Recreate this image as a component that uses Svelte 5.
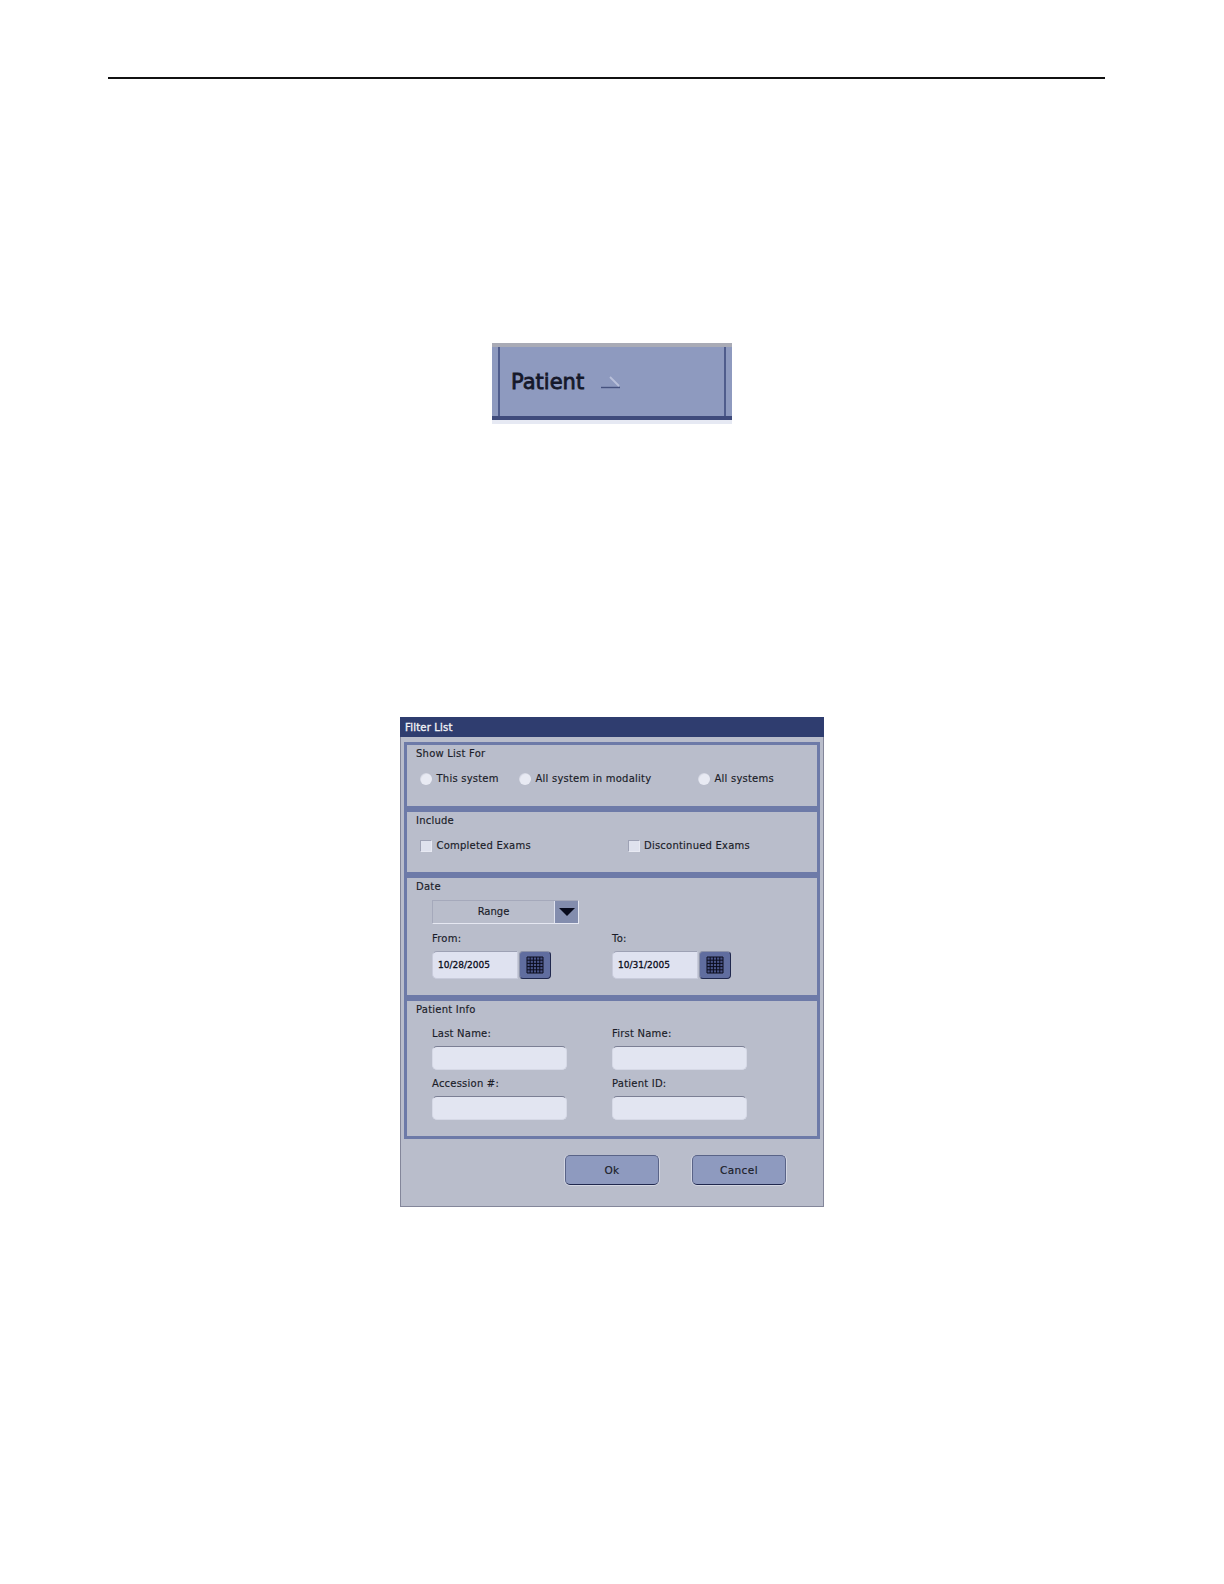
<script>
	const radios = ['This system', 'All system in modality', 'All systems'];
	const checks = ['Completed Exams', 'Discontinued Exams'];
	const dates = [
		{ label: 'From:', value: '10/28/2005' },
		{ label: 'To:', value: '10/31/2005' }
	];
	const infoFields = ['Last Name:', 'First Name:', 'Accession #:', 'Patient ID:'];
	const gridLines = [2, 5.2, 8.4, 11.6, 14.8, 18];
</script>

<div class="page">
	<div class="rule"></div>

	<div class="header-shot">
		<div class="header-cell">
			<span class="header-label">Patient</span>
			<svg class="sort-mark" width="20" height="14" viewBox="0 0 20 14">
				<path d="M0 12.5H19" stroke="#46527f" stroke-width="1.4" />
				<path d="M9 2L18 11" stroke="#b9c0da" stroke-width="1.8" fill="none" />
			</svg>
		</div>
	</div>

	<div class="dialog">
		<div class="titlebar">Filter List</div>

		<section class="group show-list">
			<div class="group-title">Show List For</div>
			<div class="radio-row">
				{#each radios as radio}
					<label class="option"><span class="radio"></span>{radio}</label>
				{/each}
			</div>
		</section>

		<section class="group include">
			<div class="group-title">Include</div>
			<div class="check-row">
				{#each checks as check}
					<label class="option"><span class="check"></span>{check}</label>
				{/each}
			</div>
		</section>

		<section class="group date">
			<div class="group-title">Date</div>
			<div class="dropdown">
				<span class="dropdown-value">Range</span>
				<span class="dropdown-arrow"><i></i></span>
			</div>
			<div class="date-row">
				{#each dates as date}
					<div class="date-field">
						<div class="field-label">{date.label}</div>
						<div class="date-control">
							<div class="date-input">{date.value}</div>
							<button class="calendar" aria-label="Calendar">
								<svg width="20" height="20" viewBox="0 0 20 20">
									<rect x="2" y="2" width="16" height="16" fill="#4a5588" />
									{#each gridLines as g}
										<path d="M{g} 2V18" stroke="#0a0c1c" stroke-width="1" />
										<path d="M2 {g}H18" stroke="#0a0c1c" stroke-width="1" />
									{/each}
								</svg>
							</button>
						</div>
					</div>
				{/each}
			</div>
		</section>

		<section class="group info">
			<div class="group-title">Patient Info</div>
			<div class="info-grid">
				{#each infoFields as field}
					<div class="info-field">
						<div class="field-label">{field}</div>
						<div class="text-input"></div>
					</div>
				{/each}
			</div>
		</section>

		<div class="actions">
			<button class="action">Ok</button>
			<button class="action">Cancel</button>
		</div>
	</div>
</div>

<style>
	:global(body) {
		background: #fff;
	}

	.page {
		display: flex;
		flex-direction: column;
		align-items: center;
		height: 1584px;
		padding-top: 77px;
		box-sizing: border-box;
		font-family: 'DejaVu Sans', sans-serif;
		color: #1a1c28;
	}

	.rule {
		align-self: flex-start;
		width: 997px;
		height: 2px;
		margin-left: 108px;
		background: #111;
	}

	.header-shot {
		width: 240px;
		height: 81px;
		margin-top: 264px;
		box-sizing: border-box;
		padding: 0 6px;
		background: #8e9abf;
		border-top: 4px solid #a9abb6;
		border-bottom: 4px solid #e6e9f3;
		box-shadow: inset 0 -4px 0 #3f4b7c;
	}

	.header-cell {
		display: flex;
		align-items: center;
		gap: 17px;
		height: 69px;
		padding-left: 11px;
		border-left: 2px solid #4f5c8c;
		border-right: 2px solid #4f5c8c;
		background: #8e9abf;
	}

	.header-label {
		font-size: 21px;
		color: #15182a;
		-webkit-text-stroke: 0.8px #15182a;
	}

	.sort-mark {
		margin-top: 1px;
	}

	.dialog {
		width: 424px;
		height: 490px;
		margin-top: 293px;
		box-sizing: border-box;
		background: #b9bdcb;
		border: 1px solid #83869a;
		border-top: 0;
		display: flex;
		flex-direction: column;
	}

	.titlebar {
		height: 20px;
		margin: 0 -1px;
		padding-left: 5px;
		background: #2f3d6f;
		color: #f1f2f6;
		font-size: 10px;
		line-height: 21px;
		letter-spacing: 0.2px;
		-webkit-text-stroke: 0.35px #f1f2f6;
	}

	.group {
		width: 416px;
		box-sizing: border-box;
		margin-left: 3px;
		padding: 0 0 0 9px;
		border: 3px solid #6d7aa8;
		font-size: 10px;
		letter-spacing: 0.22px;
		-webkit-text-stroke: 0.15px #1a1c28;
	}

	.group + .group {
		margin-top: -1px;
		border-top-width: 4px;
	}

	.show-list {
		height: 67px;
		margin-top: 5px;
	}

	.include {
		height: 67px;
	}

	.date {
		height: 124px;
	}

	.info {
		height: 142px;
	}

	.group-title {
		height: 12px;
		margin-top: 3px;
		line-height: 12px;
	}

	.radio-row,
	.check-row {
		display: grid;
		margin: 13px 0 0 4px;
		height: 12px;
	}

	.radio-row {
		grid-template-columns: 99px 179px auto;
	}

	.check-row {
		grid-template-columns: 207.5px auto;
	}

	.option {
		display: flex;
		align-items: center;
		gap: 4.5px;
		line-height: 12px;
	}

	.radio,
	.check {
		width: 12px;
		height: 12px;
		flex: none;
		box-sizing: border-box;
		margin-top: -1px;
	}

	.radio {
		border-radius: 50%;
		background: radial-gradient(circle at 58% 58%, #e8eaf3 55%, #a9adc0 100%);
	}

	.check {
		background: #dfe2ee;
		border: 1px solid #9ea2b5;
		border-right-color: #e8eaf3;
		border-bottom-color: #e8eaf3;
	}

	.dropdown {
		display: flex;
		width: 147px;
		height: 24px;
		margin: 7px 0 0 16px;
		box-sizing: border-box;
		border: 1px solid #a5a9bb;
		border-right-color: #e6e8f2;
		border-bottom-color: #e6e8f2;
	}

	.dropdown-value {
		flex: 1;
		text-align: center;
		line-height: 22px;
		font-size: 10px;
		letter-spacing: 0;
	}

	.dropdown-arrow {
		display: flex;
		align-items: center;
		justify-content: center;
		width: 23px;
		background: #838dae;
		border-left: 1px solid #dfe2ee;
	}

	.dropdown-arrow i {
		border-left: 8px solid transparent;
		border-right: 8px solid transparent;
		border-top: 8px solid #070a1c;
	}

	.date-row {
		display: grid;
		grid-template-columns: 180px auto;
		margin: 9px 0 0 16px;
	}

	.field-label {
		height: 12px;
		line-height: 12px;
	}

	.date-control {
		display: flex;
		gap: 1px;
		margin-top: 6px;
	}

	.date-input {
		width: 86px;
		height: 28px;
		box-sizing: border-box;
		padding-left: 5px;
		background: #dfe2f0;
		border: 1px solid #c8cbdb;
		border-top-color: #9da1b4;
		border-radius: 5px 0 0 5px;
		font-size: 9px;
		line-height: 26px;
		letter-spacing: 0;
		color: #0c0e1c;
		-webkit-text-stroke: 0.3px #0c0e1c;
	}

	.calendar {
		display: flex;
		align-items: center;
		justify-content: center;
		width: 32px;
		height: 28px;
		padding: 0;
		box-sizing: border-box;
		background: #606d9f;
		border: 1px solid #8d93aa;
		border-right-color: #20284e;
		border-bottom-color: #20284e;
		border-radius: 4px;
	}

	.info-grid {
		display: grid;
		grid-template-columns: 180px auto;
		row-gap: 8px;
		margin: 12px 0 0 16px;
	}

	.info-field {
		display: flex;
		flex-direction: column;
		gap: 6px;
	}

	.text-input {
		width: 135px;
		height: 24px;
		box-sizing: border-box;
		background: #e2e5f1;
		border: 1px solid #d6d9e6;
		border-top-color: #7b7f94;
		border-radius: 5px;
	}

	.actions {
		display: flex;
		justify-content: flex-end;
		gap: 33px;
		margin: 16px 37px 0 0;
	}

	.action {
		width: 94px;
		height: 30px;
		padding: 0;
		box-sizing: border-box;
		background: #8e9abf;
		border: 1px solid #5a6488;
		border-bottom-color: #20284e;
		border-radius: 5px;
		box-shadow: -1px 0 0 #d3d6e2, 1px 0 0 #d3d6e2, 0 1px 0 #d3d6e2;
		font-family: 'DejaVu Sans', sans-serif;
		font-size: 10.5px;
		letter-spacing: 0.4px;
		color: #1a1c28;
		-webkit-text-stroke: 0.15px #1a1c28;
	}
</style>
